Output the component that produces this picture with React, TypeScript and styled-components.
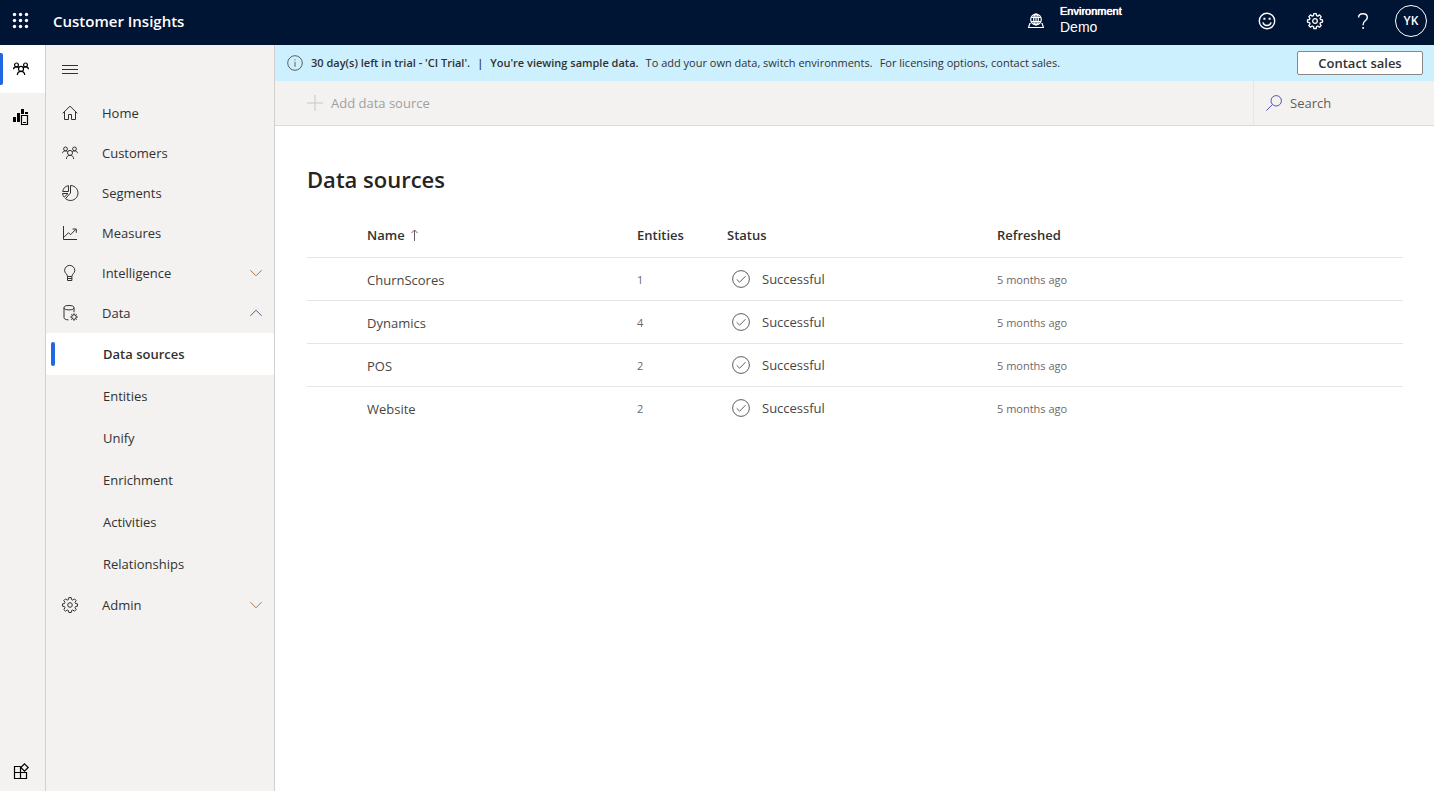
import React from "react";
import styled, { createGlobalStyle } from "styled-components";

const GlobalStyle = createGlobalStyle`
  *, *::before, *::after { box-sizing: border-box; }
  body {
    margin: 0;
    background: #fff;
    color: #323130;
    font: 400 13px/20px "Open Sans", "Noto Sans", sans-serif;
  }
  button, input { font: inherit; color: inherit; }
  button { background: none; border: 0; padding: 0; cursor: pointer; }
  svg { display: block; flex: none; overflow: visible; }
`;

/* ---------- icons ---------- */

type IconProps = { size?: number; children: React.ReactNode; box?: number; weight?: number };

const Icon = ({ size = 16, box = 16, weight = 1, children }: IconProps) => (
  <svg
    width={size}
    height={size}
    viewBox={`0 0 ${box} ${box}`}
    fill="none"
    stroke="currentColor"
    strokeWidth={weight}
    aria-hidden="true"
  >
    {children}
  </svg>
);

const WaffleIcon = () => (
  <Icon>
    <g fill="currentColor" stroke="none">
      {[1.5, 7.5, 13.5].map((y) => [1.5, 7.5, 13.5].map((x) => <circle key={`${x}-${y}`} cx={x} cy={y} r="1.7" />))}
    </g>
  </Icon>
);

const PeopleIcon = ({ weight }: { weight?: number }) => (
  <Icon weight={weight}>
    <circle cx="3.500" cy="3.900" r="1.900" />
    <circle cx="12.500" cy="3.900" r="1.900" />
    <circle cx="8" cy="7.900" r="2.500" />
    <path d="M.5 8.200C.6 6.800 1.500 5.900 3.500 5.900c1 0 1.700.3 2.200.8M15.500 8.200c-.1-1.400-1-2.300-3-2.300-1 0-1.700.3-2.200.8M4.300 14c.2-2.400 1.400-3.600 3.700-3.600s3.500 1.200 3.700 3.600" />
  </Icon>
);

const ChartDeviceIcon = () => (
  <Icon>
    <path d="M0 8h3v5H0zM4 4h3v9H4zM8 0h3v5H8zM12 3h3v2h-3z" fill="currentColor" stroke="none" />
    <path d="M8.500 6.500h6v9h-6z" strokeWidth="1.200" />
    <path d="M10 13.500h3" />
  </Icon>
);

const AppsIcon = () => (
  <Icon>
    <path d="M7.500 3.500h-6v12h12v-6h-12M7.500 3.500v12" strokeWidth="1.200" />
    <path d="M11.500.8l3.700 3.700-3.700 3.700-3.700-3.700z" strokeWidth="1.200" fill="#f3f2f1" />
  </Icon>
);

const HamburgerIcon = () => (
  <Icon>
    <path d="M0 4.500h16M0 8.500h16M0 12.500h16" />
  </Icon>
);

const HomeIcon = () => (
  <Icon>
    <path d="M.7 8.300L8 1.200l7.300 7.100M2.500 6.800v7.700h4v-5h3v5h4V6.800" />
  </Icon>
);

const SegmentsIcon = () => (
  <Icon>
    <path d="M8.500.5a7.500 7.500 0 1 1-5 13.100L8.500 8zM6.500.7v5.800H.7A7 7 0 0 1 6.500.7zM.5 8.500h5.500L2.200 12.200A7 7 0 0 1 .5 8.500z" />
  </Icon>
);

const MeasuresIcon = () => (
  <Icon>
    <path d="M1.500 1v13.500H15M2 12.200L6.500 7.700l2 2L14 4.200M10.500 4h3.800v3.800" />
  </Icon>
);

const BulbIcon = () => (
  <Icon>
    <path d="M5.500 11.500c0-2.500-2.900-3.200-2.900-6a5.100 5.100 0 0 1 10.200 0c0 2.800-2.900 3.500-2.900 6zM5.500 11.500v4h4.400v-4M5.500 13.500h4.400" />
  </Icon>
);

const DataGearIcon = () => (
  <Icon>
    <ellipse cx="7" cy="2.700" rx="5" ry="2.200" />
    <path d="M2 2.700v10c0 1.200 1.600 2 4.500 2.200M12 2.700v4.500" />
    <circle cx="12" cy="12" r="2.300" />
    <path d="M12 8.200v1.500M12 14.300v1.500M8.200 12h1.500M14.300 12h1.500M9.300 9.300l1.100 1.100M13.600 13.600l1.100 1.100M9.300 14.700l1.100-1.100M13.600 10.400l1.100-1.100" />
  </Icon>
);

const GearIcon = ({ size, weight }: { size?: number; weight?: number }) => (
  <Icon size={size} weight={weight}>
    <circle cx="8" cy="8" r="2.300" />
    <path
      strokeLinejoin="round"
      d="M6.800.6h2.400l.4 2 1.200.5 1.700-1.200 1.700 1.700L13 5.300l.5 1.200 2 .4v2.300l-2 .4-.5 1.200 1.200 1.700-1.700 1.700-1.700-1.200-1.200.5-.4 2H6.800l-.4-2-1.200-.5-1.700 1.200-1.700-1.700L3 10.800l-.5-1.200-2-.4V6.900l2-.4L3 5.300 1.800 3.600l1.700-1.700 1.700 1.200 1.200-.5z"
    />
  </Icon>
);

const ChevronIcon = ({ up }: { up?: boolean }) => (
  <Icon size={12} box={12}>
    <path d={up ? "M.4 8.800L6 3.200l5.600 5.600" : "M.4 3.200L6 8.800l5.600-5.600"} />
  </Icon>
);

const GlobeIcon = () => (
  <Icon weight={1.2}>
    <circle cx="8" cy="7.500" r="5.300" />
    <ellipse cx="8" cy="7.500" rx="2.300" ry="5.300" />
    <path d="M3.300 5.500h9.400M3.300 9.500h9.400M8 2.200v10.600" />
    <path d="M2.600 11.500H1.800L.6 15.500h14.800l-1.200-4h-.8" />
  </Icon>
);

const SmileIcon = () => (
  <Icon size={18} box={18}>
    <circle cx="9" cy="9" r="7.700" strokeWidth="1.400" />
    <path d="M5 10.300a4.100 4.100 0 0 0 8 0" strokeWidth="1.400" />
    <path d="M5.400 5.800h2v2h-2zM10.600 5.800h2v2h-2z" fill="currentColor" stroke="none" />
  </Icon>
);

const HelpIcon = () => (
  <Icon>
    <path d="M3.600 4.600C3.600 2.200 5.300.7 7.900.7s4.400 1.500 4.400 3.700c0 3.300-4.200 3.500-4.200 7v.8" strokeWidth="1.400" />
    <circle cx="8.100" cy="14.900" r="1" fill="currentColor" stroke="none" />
  </Icon>
);

const InfoIcon = () => (
  <Icon>
    <circle cx="8" cy="8" r="7.300" />
    <path d="M8 6.800v5M8 4.200v1.200" />
  </Icon>
);

const PlusIcon = () => (
  <Icon>
    <path d="M8 0v16M0 8h16" />
  </Icon>
);

const SearchIcon = () => (
  <Icon>
    <circle cx="10.200" cy="5.800" r="5.200" />
    <path d="M6.400 9.600L.4 15.600" />
  </Icon>
);

const SortIcon = () => (
  <Icon size={12} box={12}>
    <path d="M5.500 12V1M2.500 4l3-3 3 3" />
  </Icon>
);

const CheckCircleIcon = () => (
  <Icon size={18} box={18}>
    <circle cx="9" cy="9" r="8.400" />
    <path d="M4.700 9.300l2.900 2.900 5.900-6" />
  </Icon>
);

/* ---------- shell ---------- */

const Page = styled.div`
  display: flex;
  flex-direction: column;
  min-height: 100vh;
`;

const TopBar = styled.header`
  display: flex;
  align-items: center;
  height: 45px;
  padding: 0 7px 3px 0;
  background: #001433;
  color: #fff;
`;

const BarButton = styled.button<{ $width: number }>`
  display: flex;
  align-items: center;
  justify-content: center;
  width: ${(p) => p.$width}px;
  height: 40px;
`;

const Product = styled.a`
  flex: 1;
  padding-left: 12px;
  color: inherit;
  font-size: 15px;
  font-weight: 600;
  text-decoration: none;
`;

const Environment = styled.button`
  display: flex;
  align-items: center;
  gap: 16px;
  width: 215px;
  padding-bottom: 2px;
  font-family: "Liberation Sans", Arial, sans-serif;
  text-align: left;
`;

const EnvLabel = styled.span`
  display: block;
  font-size: 11px;
  line-height: 14px;
  text-shadow: 0 0 0 #fff, 0 0 1px #fff;
`;

const EnvName = styled.span`
  display: block;
  font-size: 14px;
  line-height: 18px;
`;

const Avatar = styled.button`
  width: 32px;
  height: 32px;
  margin-left: 9px;
  border: 1px solid #fff;
  border-radius: 50%;
  font-size: 12px;
  font-weight: 600;
`;

const Body = styled.div`
  display: flex;
  flex: 1;
`;

const Rail = styled.nav`
  display: flex;
  flex-direction: column;
  width: 46px;
  border-right: 1px solid #d2d0ce;
  background: #f3f2f1;
  color: #000;
`;

const RailButton = styled.button<{ $active?: boolean; $last?: boolean }>`
  position: relative;
  display: flex;
  align-items: center;
  height: ${(p) => (p.$last ? 40 : 48)}px;
  margin-top: ${(p) => (p.$last ? "auto" : 0)};
  padding-left: 13px;
  background: ${(p) => (p.$active ? "#fff" : "transparent")};

  &::before {
    content: "";
    position: absolute;
    left: 0;
    top: 8px;
    width: 3px;
    height: 32px;
    border-radius: 0 2px 2px 0;
    background: ${(p) => (p.$active ? "#2266e3" : "transparent")};
  }
`;

const Sidebar = styled.nav`
  width: 229px;
  border-right: 1px solid #d2d0ce;
  background: #f3f2f1;
`;

const MenuToggle = styled.button`
  display: flex;
  align-items: center;
  width: 48px;
  height: 48px;
  padding-left: 16px;
`;

const NavList = styled.ul`
  margin: 0;
  padding: 0;
  list-style: none;
`;

const NavLink = styled.a`
  display: flex;
  align-items: center;
  height: 40px;
  padding: 0 12px 0 16px;
  color: inherit;
  text-decoration: none;
`;

const NavText = styled.span`
  flex: 1;
  padding-left: 24px;
`;

const Chevron = styled.span<{ $open?: boolean }>`
  color: ${(p) => (p.$open ? "#605e7c" : "#b0773c")};
`;

const SubLink = styled.a<{ $active?: boolean }>`
  position: relative;
  display: flex;
  align-items: center;
  height: 42px;
  padding-left: 57px;
  border-radius: 2px;
  background: ${(p) => (p.$active ? "#fff" : "transparent")};
  color: inherit;
  font-weight: ${(p) => (p.$active ? 600 : 400)};
  text-decoration: none;

  &::before {
    content: "";
    position: absolute;
    left: 5px;
    top: 9px;
    width: 4px;
    height: 24px;
    border-radius: 2px;
    background: ${(p) => (p.$active ? "#2266e3" : "transparent")};
  }
`;

/* ---------- main area ---------- */

const Main = styled.main`
  flex: 1;
  min-width: 0;
`;

const Banner = styled.div`
  display: flex;
  align-items: center;
  gap: 8px;
  height: 36px;
  padding: 0 11px 0 12px;
  background: #cdf0ff;
  font-size: 11px;

  > svg { color: #605e5c; }
`;

const BannerText = styled.p`
  display: flex;
  flex: 1;
  gap: 7px;
  margin: 0;
`;

const Strong = styled.strong`
  font-weight: 600;
`;

const SalesButton = styled.button`
  width: 126px;
  height: 24px;
  border: 1px solid #8a8886;
  border-radius: 2px;
  background: #fff;
  font-size: 13px;
  font-weight: 600;
`;

const CommandBar = styled.div`
  display: flex;
  align-items: stretch;
  justify-content: space-between;
  height: 45px;
  padding-left: 32px;
  border-bottom: 1px solid #dcdad8;
  background: #f3f2f1;
`;

const AddButton = styled.button`
  display: flex;
  align-items: center;
  gap: 8px;
  color: #a19f9d;

  svg { color: #c8c6c4; }
`;

const SearchBox = styled.label`
  display: flex;
  align-items: center;
  gap: 8px;
  width: 181px;
  padding: 0 12px;
  border-left: 1px solid #e8e6e4;
  color: #4f52b8;
`;

const SearchInput = styled.input`
  flex: 1;
  min-width: 0;
  padding: 0;
  border: 0;
  outline: 0;
  background: none;
  color: #323130;

  &::placeholder { color: #605e5c; opacity: 1; }
`;

const Content = styled.section`
  padding: 37px 31px 0 32px;
`;

const Title = styled.h1`
  margin: 0 0 19px;
  color: #252423;
  font-size: 22px;
  font-weight: 600;
  line-height: 32px;
`;

const Table = styled.table`
  width: 100%;
  border-collapse: collapse;
  table-layout: fixed;
  text-align: left;
`;

const Column = styled.col<{ $width?: number }>`
  width: ${(p) => (p.$width ? `${p.$width}px` : "auto")};
`;

const Row = styled.tr`
  height: 43px;

  & + & , tbody > & { border-top: 1px solid #e6e5e4; }
`;

const HeadCell = styled.th<{ $first?: boolean }>`
  padding: 0 0 0 ${(p) => (p.$first ? 60 : 0)}px;
  font-weight: 600;
`;

const Sort = styled.button`
  display: flex;
  align-items: center;
  gap: 4px;
  font-weight: 600;

  svg { color: #6b5a66; }
`;

const NameCell = styled.td`
  padding: 2px 0 0 60px;
  color: #484644;
`;

const Cell = styled.td`
  padding: 0;
  color: #484644;
`;

const MinorCell = styled.td`
  padding: 2px 0 0;
  color: #6b6967;
  font-size: 11px;
`;

const Status = styled.span`
  display: flex;
  align-items: center;
  gap: 12px;
  padding-left: 5px;

  svg { color: #605e5c; }
`;

const navItems = [
  { label: "Home", icon: <HomeIcon /> },
  { label: "Customers", icon: <PeopleIcon /> },
  { label: "Segments", icon: <SegmentsIcon /> },
  { label: "Measures", icon: <MeasuresIcon /> },
  { label: "Intelligence", icon: <BulbIcon />, expandable: true },
  {
    label: "Data",
    icon: <DataGearIcon />,
    expandable: true,
    items: ["Data sources", "Entities", "Unify", "Enrichment", "Activities", "Relationships"],
  },
  { label: "Admin", icon: <GearIcon />, expandable: true },
];

const sources = [
  { name: "ChurnScores", entities: 1 },
  { name: "Dynamics", entities: 4 },
  { name: "POS", entities: 2 },
  { name: "Website", entities: 2 },
];

export default function App() {
  return (
    <Page>
      <GlobalStyle />
      <TopBar>
        <BarButton $width={41} aria-label="App launcher"><WaffleIcon /></BarButton>
        <Product href="#">Customer Insights</Product>
        <Environment>
          <GlobeIcon />
          <span>
            <EnvLabel>Environment</EnvLabel>
            <EnvName>Demo</EnvName>
          </span>
        </Environment>
        <BarButton $width={48} aria-label="Feedback"><SmileIcon /></BarButton>
        <BarButton $width={48} aria-label="Settings"><GearIcon weight={1.3} /></BarButton>
        <BarButton $width={47} aria-label="Help"><HelpIcon /></BarButton>
        <Avatar>YK</Avatar>
      </TopBar>

      <Body>
        <Rail aria-label="Apps">
          <RailButton $active aria-label="Audience insights"><PeopleIcon weight={1.2} /></RailButton>
          <RailButton aria-label="Engagement insights"><ChartDeviceIcon /></RailButton>
          <RailButton $last aria-label="More apps"><AppsIcon /></RailButton>
        </Rail>

        <Sidebar aria-label="Main">
          <MenuToggle aria-label="Toggle navigation"><HamburgerIcon /></MenuToggle>
          <NavList>
            {navItems.map((item) => (
              <li key={item.label}>
                <NavLink href="#">
                  {item.icon}
                  <NavText>{item.label}</NavText>
                  {item.expandable && (
                    <Chevron $open={!!item.items}><ChevronIcon up={!!item.items} /></Chevron>
                  )}
                </NavLink>
                {item.items && (
                  <NavList>
                    {item.items.map((sub, i) => (
                      <li key={sub}>
                        <SubLink href="#" $active={i === 0}>{sub}</SubLink>
                      </li>
                    ))}
                  </NavList>
                )}
              </li>
            ))}
          </NavList>
        </Sidebar>

        <Main>
          <Banner>
            <InfoIcon />
            <BannerText>
              <Strong>30 day(s) left in trial - 'CI Trial'.</Strong>
              <Strong>|</Strong>
              <Strong>You're viewing sample data.</Strong>
              <span>To add your own data, switch environments.</span>
              <span>For licensing options, contact sales.</span>
            </BannerText>
            <SalesButton>Contact sales</SalesButton>
          </Banner>
          <CommandBar>
            <AddButton><PlusIcon />Add data source</AddButton>
            <SearchBox>
              <SearchIcon />
              <SearchInput type="search" placeholder="Search" aria-label="Search" />
            </SearchBox>
          </CommandBar>
          <Content>
            <Title>Data sources</Title>
            <Table>
              <colgroup>
                <Column $width={330} />
                <Column $width={90} />
                <Column $width={270} />
                <Column />
              </colgroup>
              <thead>
                <Row>
                  <HeadCell $first aria-sort="ascending"><Sort>Name<SortIcon /></Sort></HeadCell>
                  <HeadCell>Entities</HeadCell>
                  <HeadCell>Status</HeadCell>
                  <HeadCell>Refreshed</HeadCell>
                </Row>
              </thead>
              <tbody>
                {sources.map((source) => (
                  <Row key={source.name}>
                    <NameCell>{source.name}</NameCell>
                    <MinorCell>{source.entities}</MinorCell>
                    <Cell><Status><CheckCircleIcon />Successful</Status></Cell>
                    <MinorCell>5 months ago</MinorCell>
                  </Row>
                ))}
              </tbody>
            </Table>
          </Content>
        </Main>
      </Body>
    </Page>
  );
}
